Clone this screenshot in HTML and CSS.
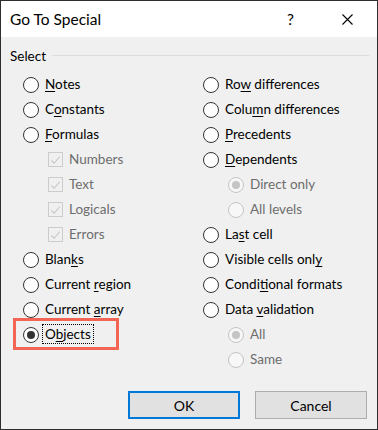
FILE: index.html
```html
<!DOCTYPE html>
<html>
<head>
<meta charset="utf-8">
<link rel="stylesheet" href="styles.css">
</head>
<body>
<div class="dialog">
  <div class="titlebar">
    <span class="title">Go To Special</span>
    <span class="help">?</span>
    <svg class="close" width="11" height="11" viewBox="0 0 11 11"><path d="M0.5 0.5 L10.5 10.5 M10.5 0.5 L0.5 10.5" stroke="#000" stroke-width="1.1" fill="none"/></svg>
  </div>
  <div class="body">
    <div class="group-head"><span class="group-label">Select</span><span class="rule"></span></div>
    <div class="cols">
      <div class="col">
        <div class="row"><span class="radio"></span><span class="label"><u>N</u>otes</span></div>
        <div class="row"><span class="radio"></span><span class="label">C<u>o</u>nstants</span></div>
        <div class="row"><span class="radio"></span><span class="label"><u>F</u>ormulas</span></div>
        <div class="row sub"><span class="check"><svg width="14" height="14" viewBox="0 0 14 14"><path d="M2.5 7.5 L5.5 10.5 L11.5 3.5" stroke="#c4c4c4" stroke-width="1.2" fill="none"/></svg></span><span class="label dis">Numbers</span></div>
        <div class="row sub"><span class="check"><svg width="14" height="14" viewBox="0 0 14 14"><path d="M2.5 7.5 L5.5 10.5 L11.5 3.5" stroke="#c4c4c4" stroke-width="1.2" fill="none"/></svg></span><span class="label dis">Text</span></div>
        <div class="row sub"><span class="check"><svg width="14" height="14" viewBox="0 0 14 14"><path d="M2.5 7.5 L5.5 10.5 L11.5 3.5" stroke="#c4c4c4" stroke-width="1.2" fill="none"/></svg></span><span class="label dis">Logicals</span></div>
        <div class="row sub"><span class="check"><svg width="14" height="14" viewBox="0 0 14 14"><path d="M2.5 7.5 L5.5 10.5 L11.5 3.5" stroke="#c4c4c4" stroke-width="1.2" fill="none"/></svg></span><span class="label dis">Errors</span></div>
        <div class="row"><span class="radio"></span><span class="label">Blan<u>k</u>s</span></div>
        <div class="row"><span class="radio"></span><span class="label">Current <u>r</u>egion</span></div>
        <div class="row"><span class="radio"></span><span class="label">Current <u>a</u>rray</span></div>
        <div class="row objects"><span class="radio on"></span><span class="label focus">O<u>b</u>jects</span><span class="highlight"></span></div>
      </div>
      <div class="col">
        <div class="row"><span class="radio"></span><span class="label">Ro<u>w</u> differences</span></div>
        <div class="row"><span class="radio"></span><span class="label">Colu<u>m</u>n differences</span></div>
        <div class="row"><span class="radio"></span><span class="label"><u>P</u>recedents</span></div>
        <div class="row"><span class="radio"></span><span class="label"><u>D</u>ependents</span></div>
        <div class="row sub"><span class="radio dis on"></span><span class="label dis">Direct only</span></div>
        <div class="row sub"><span class="radio dis"></span><span class="label dis">All levels</span></div>
        <div class="row"><span class="radio"></span><span class="label">La<u>s</u>t cell</span></div>
        <div class="row"><span class="radio"></span><span class="label">Visible cells onl<u>y</u></span></div>
        <div class="row"><span class="radio"></span><span class="label">Condi<u>t</u>ional formats</span></div>
        <div class="row"><span class="radio"></span><span class="label">Data <u>v</u>alidation</span></div>
        <div class="row sub"><span class="radio dis on"></span><span class="label dis">All</span></div>
        <div class="row sub"><span class="radio dis"></span><span class="label dis">Same</span></div>
      </div>
    </div>
    <div class="buttons">
      <button class="btn default">OK</button>
      <button class="btn">Cancel</button>
    </div>
  </div>
</div>
</body>
</html>
```
FILE: styles.css
```css
html, body {
  margin: 0;
  padding: 0;
}
body {
  font-family: Lato, "Open Sans", sans-serif;
  font-size: 13.5px;
  color: #000;
  background: #f0f0f0;
}
.dialog {
  width: 378px;
  height: 430px;
  box-sizing: border-box;
  border: 1px solid #2e2e2e;
  background: #f0f0f0;
  display: flex;
  flex-direction: column;
}
.titlebar {
  height: 36px;
  background: #fff;
  display: flex;
  align-items: center;
  padding-left: 9px;
  padding-right: 24px;
}
.title {
  flex: 1;
  font-size: 15.5px;
  margin-top: -1px;
}
.help {
  font-size: 15.5px;
  margin-right: 48px;
  margin-top: -1px;
}
.close {
  display: block;
  margin-top: 1px;
}
.body {
  flex: 1;
  display: flex;
  flex-direction: column;
  padding-top: 9px;
}
.group-head {
  height: 20px;
  display: flex;
  align-items: center;
  padding-left: 9px;
  padding-right: 8px;
}
.rule {
  flex: 1;
  height: 1px;
  background: #dcdcdc;
  margin-left: 6px;
  margin-top: -1px;
}
.cols {
  margin-top: 6px;
  display: grid;
  grid-template-columns: 180px 1fr;
  padding-left: 22px;
}
.row {
  height: 25px;
  display: flex;
  align-items: center;
  white-space: nowrap;
}
.row.sub {
  padding-left: 25px;
}
.label {
  margin-top: -1px;
}
.radio {
  width: 16px;
  height: 16px;
  box-sizing: border-box;
  border: 1px solid #333;
  border-radius: 50%;
  background: #fff;
  margin-right: 6px;
  flex: none;
  display: flex;
  align-items: center;
  justify-content: center;
}
.radio.on::after {
  content: "";
  width: 8px;
  height: 8px;
  border-radius: 50%;
  background: #333;
}
.radio.dis {
  border-color: #c4c4c4;
  background: #f7f7f7;
}
.radio.dis.on::after {
  background: #c4c4c4;
}
.check {
  width: 15px;
  height: 15px;
  box-sizing: border-box;
  border: 1px solid #cccccc;
  background: #f0f0f0;
  margin-right: 6px;
  flex: none;
  display: flex;
  align-items: center;
  justify-content: center;
}
.check svg {
  display: block;
}
.label.dis {
  color: #6d6d6d;
}
u {
  text-underline-offset: 2px;
}
.objects {
  position: relative;
}
.focus {
  border: 1px dotted #000;
  padding: 0 2px;
  margin-left: -3px;
  line-height: 18px;
}
.highlight {
  position: absolute;
  left: -10px;
  top: -4px;
  width: 106px;
  height: 32px;
  box-sizing: border-box;
  border: 3px solid #f26454;
}
.buttons {
  margin-top: 19px;
  display: flex;
  justify-content: flex-end;
  gap: 15px;
  padding-right: 10px;
}
.btn {
  width: 112px;
  height: 28px;
  box-sizing: border-box;
  background: #e1e1e1;
  border: 1px solid #adadad;
  font-family: inherit;
  font-size: 14px;
  color: #000;
  padding: 0;
  margin: 0;
}
.btn.default {
  border: 2px solid #0078d7;
}
```
